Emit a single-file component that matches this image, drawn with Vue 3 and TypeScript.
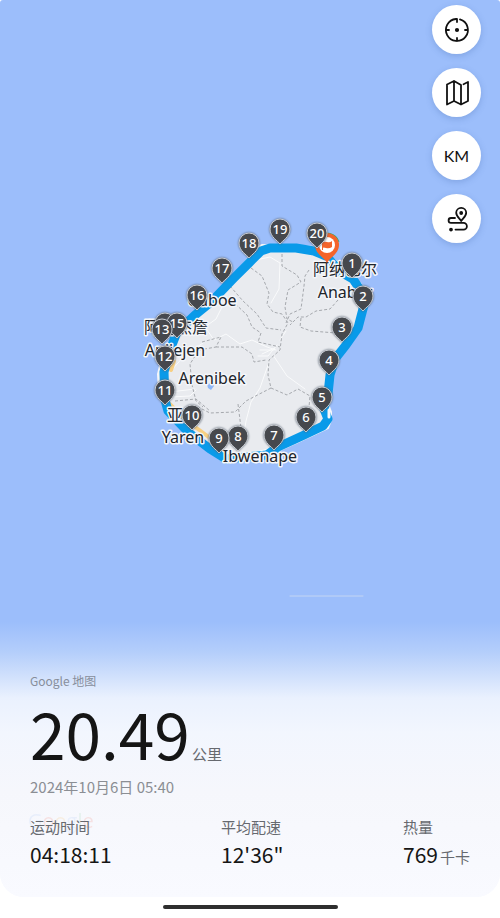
<script setup lang="ts">
interface Pin {
  n: number
  x: number
  y: number
}

interface Place {
  name: string
  x: number
  y: number
}

interface Stat {
  label: string
  value: string
  unit?: string
}

// Listed back to front, so that overlapping markers stack correctly.
const pins: Pin[] = [
  { n: 20, x: 317, y: 234 },
  { n: 19, x: 280, y: 230 },
  { n: 18, x: 249, y: 244 },
  { n: 17, x: 222, y: 269 },
  { n: 16, x: 197, y: 296 },
  { n: 14, x: 165, y: 324 },
  { n: 15, x: 177, y: 324 },
  { n: 13, x: 162, y: 330 },
  { n: 12, x: 165, y: 357 },
  { n: 11, x: 165, y: 391 },
  { n: 10, x: 192, y: 416 },
  { n: 8, x: 238, y: 437 },
  { n: 9, x: 219, y: 439 },
  { n: 7, x: 274, y: 436 },
  { n: 6, x: 306, y: 418 },
  { n: 5, x: 322, y: 398 },
  { n: 4, x: 329, y: 361 },
  { n: 3, x: 342, y: 328 },
  { n: 2, x: 363, y: 297 },
  { n: 1, x: 352, y: 264 },
]

const places: Place[] = [
  { name: '阿纳巴尔', x: 345, y: 275 },
  { name: 'Anabar', x: 345, y: 298 },
  { name: 'Uaboe', x: 212, y: 306 },
  { name: '阿内杰詹', x: 176, y: 333 },
  { name: 'Anijejen', x: 175, y: 356 },
  { name: 'Arenibek', x: 212, y: 384 },
  { name: '亚伦', x: 183, y: 421 },
  { name: 'Yaren', x: 183, y: 443 },
  { name: 'Ibwenape', x: 260, y: 462 },
]

const stats: Stat[] = [
  { label: '运动时间', value: '04:18:11' },
  { label: '平均配速', value: '12\'36"' },
  { label: '热量', value: '769', unit: '千卡' },
]

const logo = [
  { ch: 'G', tone: 'blue' },
  { ch: 'o', tone: 'red' },
  { ch: 'o', tone: 'yellow' },
  { ch: 'g', tone: 'blue' },
  { ch: 'l', tone: 'green' },
  { ch: 'e', tone: 'red' },
]
</script>

<template>
  <main class="screen">
    <div class="stage">
      <svg class="map" viewBox="0 0 500 690" role="img" aria-label="路线地图">
        <path
          class="land"
          d="M262 245 L318 247 L345 268 L361 284 L366 305 L358 331 L338 358 L331 380 L328 404 L331 412 L331 420 L328 428 L300 441 L271 454 L228 463 L205 447 L180 428 L164 407 L159 392 L158 374 L164 350 L177 330 L210 299 L240 268 L258 247 Z"
        />
        <g class="roads">
          <path d="M186 327 L216 303 L226 284 L246 262 L270 257 L280 263 L279 289 L271 303" />
          <path d="M188 333 L205 327 L214 340 L226 334 L240 344 L252 340 L267 347 L276 350" />
          <path d="M205 327 L216 319 L222 307" />
          <path d="M275 348 L262 354 M274 350 L260 350 M277 345 L268 356 L258 356" />
          <path d="M273 355 L287 376 L305 389 M268 365 L260 388 L251 402 L246 421 L243 440" />
          <path d="M280 340 L286 331 M170 372 L185 355 L203 343" />
          <path d="M170 392 L195 389 M171 397 L190 396 L196 390 M325 421 L280 446 L244 455" />
        </g>
        <g class="tracks">
          <path d="M251 268 L262 276 L269 293 L267 304 L273 312 L282 314 L288 323 L282 334 L280 350 L269 360 L268 375 L271 388 L246 401 L235 412 L210 413 L198 407" />
          <path d="M282 254 L282 266 L297 275 L301 282 L288 290 L285 307 L287 319 L293 322" />
          <path d="M309 270 L305 276 L304 286 L301 309 L290 314 L286 323" />
          <path d="M338 300 L330 309 L316 311 L306 317 L298 317 L290 325" />
          <path d="M301 318 L300 327 L311 331 L336 333" />
          <path d="M230 286 L243 301 L257 314 L266 328 L281 330" />
          <path d="M228 297 L247 315 L252 327 L261 333 L258 342 L280 347" />
          <path d="M202 342 L221 337 L216 347 L199 350 L190 364 L192 385 L196 401 L203 407" />
          <path d="M216 347 L242 347 L252 354 L254 362 L266 360" />
          <path d="M271 388 L287 395 L298 389 L310 396 L309 407" />
          <path d="M238 404 L241 428 M175 401 L196 399 L210 411" />
        </g>
        <path class="highway" d="M170 404 L184 419 L202 432 L218 444 M168 365 L171 370 L174 361" />
        <path class="lake" d="M207 384 L213 383 L214 386 L211 390 L208 388 Z" />
        <path
          class="route"
          d="M326 256 L341 272 L353 279 L361 291 L364 305 L358 328 L346 345 L335 359 L330 375 L328 394 L324 409 L328 419 L323 426 L302 436 L278 447 L267 455 L226 459 L210 449 L188 432 L168 411 L165 400 L164 372 L170 350 L177 332 L195 315 L211 302 L234 278 L249 263 L261 251 L270 248 L296 248 L314 251 L326 256"
        />
        <path class="shore" d="M329 410 V417" />
        <path class="scale" d="M290 596 H363" />

        <g class="places">
          <text v-for="p in places" :key="p.name" :x="p.x" :y="p.y">{{ p.name }}</text>
        </g>

        <g transform="translate(327 246)">
          <path class="start" d="M-8 -9 A12 12 0 0 1 11 -4" />
          <path class="finish" d="M0 17 C-2 12 -12 8 -12 -1 A12 12 0 0 1 12 -1 C12 8 2 12 0 17 Z" />
          <circle r="8" cy="-1" fill="#fff" />
          <path class="flag" d="M-5 4 V-3 Q-3 -5 0 -4 T5 -5 V1 Q2 3 -1 2 T-4 2 V4 Z" />
        </g>

        <g v-for="p in pins" :key="p.n" :transform="`translate(${p.x} ${p.y})`">
          <path class="pin" d="M0 14 C-2 11 -10 7 -10 -1 A10 10 0 0 1 10 -1 C10 7 2 11 0 14 Z" />
          <text class="pin-no" y="4">{{ p.n }}</text>
        </g>
      </svg>

      <nav class="tools" aria-label="地图工具">
        <button type="button" aria-label="定位">
          <svg viewBox="0 0 28 28">
            <path d="M13 3 A11 11 0 1 0 17 3.4 M13 3 H14 V6 M14 22 V25 M3 14 H6 M22 14 H25" />
            <circle class="solid" cx="14" cy="14" r="1.2" />
          </svg>
        </button>
        <button type="button" aria-label="地图类型">
          <svg viewBox="0 0 28 28">
            <path d="M18 25 V6 L11 2 L4 5.5 V25.5 L11 22 L18 25.5 L25 22 V3 L20.5 5.2 M11 2 V22" />
          </svg>
        </button>
        <button type="button" class="km">KM</button>
        <button type="button" aria-label="路线">
          <svg viewBox="0 0 28 28">
            <path d="M18.2 16 C16 13 13.2 11 13.2 7.8 A5 5 0 0 1 23.2 7.8 C23.2 11 20.4 13 18.2 16 Z" />
            <path d="M12 13 H8 A2.4 2.4 0 0 0 8 17.8 H20.5 A3.4 3.4 0 0 1 20.5 24.6 H12.5" />
            <circle class="solid" cx="18.2" cy="8" r="1" />
            <circle class="solid" cx="8" cy="24.6" r="1" />
          </svg>
        </button>
      </nav>

      <section class="sheet">
        <p class="source">Google 地图</p>
        <h1 class="distance">20.49<span class="unit">公里</span></h1>
        <p class="date">2024年10月6日 05:40</p>
        <div class="summary">
          <span class="logo" aria-hidden="true"><span v-for="(l, i) in logo" :key="i" :class="l.tone">{{ l.ch }}</span></span>
          <dl class="stats">
            <div v-for="s in stats" :key="s.label">
              <dt>{{ s.label }}</dt>
              <dd>{{ s.value }}<span v-if="s.unit" class="unit">{{ s.unit }}</span></dd>
            </div>
          </dl>
        </div>
      </section>
    </div>
    <div class="home"></div>
  </main>
</template>

<style>
body {
  margin: 0;
  background: #fff;
}
</style>

<style scoped>
.screen {
  display: flex;
  flex-direction: column;
  min-height: 100vh;
  font-family: "Noto Sans CJK SC", "Noto Sans", sans-serif;
  color: #151515;
}
.stage {
  position: relative;
  display: flex;
  flex: 1;
  flex-direction: column;
  overflow: hidden;
  border-radius: 3px 3px 24px 24px;
  background: #f8f9fe;
}
.map {
  display: block;
  width: 100%;
  height: auto;
  background: #9cbefb;
}
.land {
  fill: #e9ebef;
  stroke: #f5f6f8;
  stroke-width: 2;
}
.roads,
.tracks,
.highway,
.route,
.shore,
.scale {
  fill: none;
  stroke-linejoin: round;
  stroke-linecap: round;
}
.roads {
  stroke: #fafbfc;
  stroke-width: 1;
}
.tracks {
  stroke: #a6a9ae;
  stroke-width: 1;
  stroke-linecap: butt;
  stroke-dasharray: 3 2;
}
.highway {
  stroke: #f7cf83;
  stroke-width: 4;
}
.lake {
  fill: #8fb8f8;
}
.route {
  stroke: #099ae9;
  stroke-width: 9;
}
.shore {
  stroke: #f3f5f9;
  stroke-width: 3;
}
.scale {
  stroke: #c3d5f3;
  stroke-width: 1;
}
.places text {
  font-family: "Noto Sans", "Noto Sans CJK SC", sans-serif;
  font-size: 16px;
  text-anchor: middle;
  fill: #20242a;
  stroke: #f4f6fa;
  stroke-width: 3;
  stroke-linejoin: round;
  paint-order: stroke;
}
.start {
  fill: none;
  stroke: #31ad68;
  stroke-width: 3;
}
.finish,
.flag {
  fill: #f4642a;
}
.pin {
  fill: #45474b;
  fill-opacity: 0.94;
  stroke: #c9ccd2;
  stroke-width: 1;
  filter: drop-shadow(0 0 1px #55606f);
}
.pin-no {
  font-family: "Noto Sans", sans-serif;
  font-size: 13px;
  font-weight: 500;
  text-anchor: middle;
  fill: #fff;
}
.tools {
  position: absolute;
  top: 5px;
  right: 19px;
  display: flex;
  flex-direction: column;
  gap: 14px;
}
.tools button {
  display: flex;
  align-items: center;
  justify-content: center;
  width: 49px;
  height: 49px;
  padding: 0;
  border: 0;
  border-radius: 50%;
  background: #fff;
  box-shadow: 0 2px 6px rgba(50, 90, 160, 0.25);
  color: #111;
}
.tools svg {
  width: 28px;
  height: 28px;
  fill: none;
  stroke: #111;
  stroke-width: 1.8;
  stroke-linejoin: round;
  stroke-linecap: round;
}
.tools .solid {
  fill: #111;
}
.tools .km {
  font-family: Lato, sans-serif;
  font-size: 16px;
}
.sheet {
  position: relative;
  flex: 1;
  margin-top: -68px;
  padding: 50px 30px 24px;
  background: linear-gradient(
    rgba(248, 249, 254, 0) 0,
    #b4cefb 30px,
    #d0e0fc 54px,
    #eaf1fe 76px,
    #f2f6fe 110px,
    #f6f7fc 170px,
    #f9faff 276px
  );
}
.source {
  margin: 0;
  font-size: 12px;
  line-height: 18px;
  color: #878e9b;
}
.distance {
  display: flex;
  align-items: baseline;
  gap: 2px;
  margin: 6px 0 0;
  font-size: 64px;
  font-weight: 400;
  line-height: 72px;
}
.unit {
  font-size: 15px;
  line-height: 20px;
  color: #66696f;
}
.date {
  margin: 9px 0 0;
  font-size: 15px;
  line-height: 20px;
  color: #8b8e94;
}
.summary {
  position: relative;
  margin-top: 20px;
}
.logo {
  position: absolute;
  top: -8px;
  left: -2px;
  font-family: "Open Sans", sans-serif;
  font-size: 20px;
  line-height: 24px;
  opacity: 0.16;
}
.blue {
  color: #9fc0f5;
}
.red {
  color: #f0705f;
}
.yellow {
  color: #f5b95a;
}
.green {
  color: #8fd0a0;
}
.stats {
  position: relative;
  display: grid;
  grid-template-columns: 21fr 20fr auto;
  margin: 0;
}
.stats dt {
  font-size: 15px;
  line-height: 20px;
  color: #66696f;
}
.stats dd {
  display: flex;
  align-items: baseline;
  gap: 2px;
  margin: 2px 0 0;
  font-size: 21px;
  line-height: 30px;
}
.home {
  width: 35%;
  height: 4px;
  margin: 8px auto 9px;
  border-radius: 2px;
  background: #2e2e2e;
}
</style>
